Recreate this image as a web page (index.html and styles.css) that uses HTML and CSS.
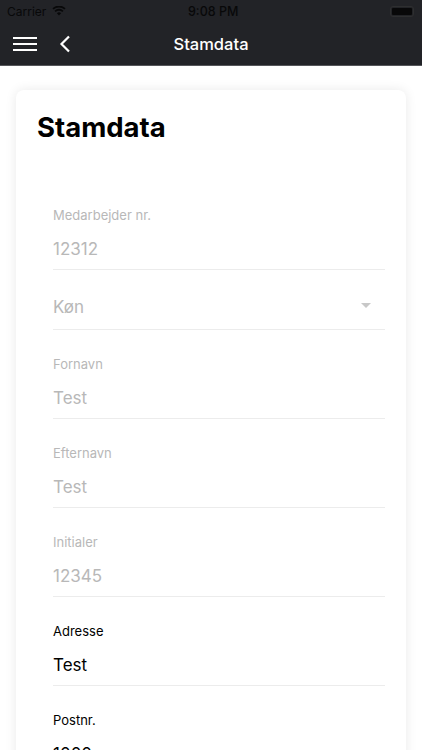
FILE: index.html
```html
<!DOCTYPE html>
<html lang="da">
<head>
<meta charset="utf-8">
<title>Stamdata</title>
<link rel="stylesheet" href="styles.css">
</head>
<body>
<div class="screen">
  <header class="header">
    <div class="status">
      <div class="status-left">
        <span>Carrier</span>
        <svg class="wifi" width="14" height="10" viewBox="0 0 14 10"><path d="M7 9.600 4.900 7.200a3 3 0 0 1 4.200 0z" fill="#000"/><path d="M3.700 6 2.500 4.700a6.400 6.400 0 0 1 9 0L10.300 6a4.700 4.700 0 0 0-6.600 0z" fill="#000"/><path d="M1.600 3.600.4 2.300a9.400 9.400 0 0 1 13.200 0l-1.200 1.300a7.700 7.700 0 0 0-10.800 0z" fill="#000"/></svg>
      </div>
      <span class="clock">9:08 PM</span>
      <div class="battery"><span class="battery-fill"></span></div>
    </div>
    <nav class="nav">
      <div class="burger"><span></span><span></span><span></span></div>
      <svg class="back" width="12" height="18" viewBox="0 0 12 18"><path d="M10 1.500 2.500 9l7.500 7.500" fill="none" stroke="#fff" stroke-width="2.200"/></svg>
      <span class="nav-title">Stamdata</span>
    </nav>
  </header>
  <main class="content">
    <section class="card">
      <h1 class="card-title">Stamdata</h1>
      <div class="form">
        <div class="field disabled"><label>Medarbejder nr.</label><div class="value">12312</div></div>
        <div class="field select disabled"><div class="value">Køn</div><span class="caret"></span></div>
        <div class="field disabled"><label>Fornavn</label><div class="value">Test</div></div>
        <div class="field disabled"><label>Efternavn</label><div class="value">Test</div></div>
        <div class="field disabled"><label>Initialer</label><div class="value">12345</div></div>
        <div class="field"><label>Adresse</label><div class="value">Test</div></div>
        <div class="field"><label>Postnr.</label><div class="value">1000</div></div>
      </div>
    </section>
  </main>
</div>
</body>
</html>
```
FILE: styles.css
```css
* { box-sizing: border-box; }
html, body { margin: 0; height: 100%; }
body { font-family: Inter, "Liberation Sans", sans-serif; background: #fff; overflow: hidden; }
.screen { width: 422px; height: 750px; overflow: hidden; display: flex; flex-direction: column; }
.header { background: #222327; height: 66px; flex: none; display: flex; flex-direction: column; border-bottom: 1px solid #55565a; }
.status { height: 22px; padding: 0 8px 0 7px; display: flex; align-items: center; justify-content: space-between; font-size: 12px; position: relative; opacity: .75; }
.status-left { display: flex; align-items: center; gap: 6px; color: #000; }
.clock { position: absolute; left: 188px; font-size: 12.5px; font-weight: 500; color: #000; }
.battery { width: 24px; height: 11px; border: 1px solid #333; border-radius: 3px; padding: 1px; }
.battery-fill { display: block; height: 100%; background: #000; border-radius: 1px; }
.nav { height: 43px; display: flex; align-items: center; position: relative; padding-left: 13px; }
.burger { width: 24px; display: flex; flex-direction: column; gap: 4px; }
.burger span { height: 2px; background: #fff; }
.back { margin-left: 22px; }
.nav-title { position: absolute; left: 0; right: 0; text-align: center; color: #fff; font-size: 16.5px; font-weight: 500; pointer-events: none; }
.content { flex: 1; padding: 24px 16px 0; min-height: 0; }
.card { background: #fff; border-radius: 8px; box-shadow: 0 0 12px rgba(0,0,0,.09); padding: 21px 21px 40px; }
.card-title { margin: 0; font-size: 27.5px; line-height: 32px; font-weight: 700; color: #000; }
.form { margin-top: 63px; padding-left: 16px; display: flex; flex-direction: column; gap: 25px; }
.field { height: 64px; flex: none; position: relative; border-bottom: 1px solid #ececec; color: #000; }
.field label { display: block; font-size: 13px; line-height: 18px; }
.field .value { font-size: 17px; line-height: 22px; margin-top: 14px; }
.field.select { height: 35px; padding-top: 1px; }
.field.select .value { margin-top: 0; }
.disabled { color: #b8b8b8; }
.caret { position: absolute; right: 14px; top: 8px; width: 0; height: 0; border: 5px solid transparent; border-top: 5px solid #c8c8c8; border-bottom: 0; }
```
